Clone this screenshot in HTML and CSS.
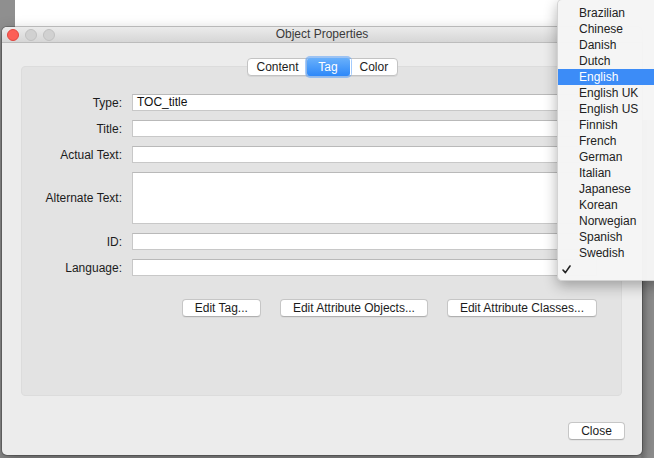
FILE: index.html
```html
<!DOCTYPE html>
<html>
<head>
<meta charset="utf-8">
<title>Object Properties</title>
<link rel="stylesheet" href="styles.css">
</head>
<body>
<div class="desktop">
  <div class="backdrop"></div>
  <div class="window">
    <div class="titlebar">
      <div class="lights">
        <span class="light close-l"></span>
        <span class="light"></span>
        <span class="light"></span>
      </div>
      <div class="title">Object Properties</div>
    </div>
    <div class="win-body">
      <div class="tabs">
        <div class="seg seg-content">Content</div>
        <div class="seg seg-tag active">Tag</div>
        <div class="seg seg-color">Color</div>
      </div>
      <div class="panel">
        <div class="form">
          <label class="lbl">Type:</label>
          <div class="field">TOC_title</div>
          <label class="lbl">Title:</label>
          <div class="field"></div>
          <label class="lbl">Actual Text:</label>
          <div class="field"></div>
          <label class="lbl">Alternate Text:</label>
          <div class="field tall"></div>
          <label class="lbl">ID:</label>
          <div class="field"></div>
          <label class="lbl">Language:</label>
          <div class="field"></div>
        </div>
        <div class="actions">
          <button class="btn">Edit Tag...</button>
          <button class="btn">Edit Attribute Objects...</button>
          <button class="btn">Edit Attribute Classes...</button>
        </div>
      </div>
      <div class="footer">
        <button class="btn btn-close">Close</button>
      </div>
    </div>
  </div>
  <div class="menu">
    <div class="item">Brazilian</div>
    <div class="item">Chinese</div>
    <div class="item">Danish</div>
    <div class="item">Dutch</div>
    <div class="item selected">English</div>
    <div class="item">English UK</div>
    <div class="item">English US</div>
    <div class="item">Finnish</div>
    <div class="item">French</div>
    <div class="item">German</div>
    <div class="item">Italian</div>
    <div class="item">Japanese</div>
    <div class="item">Korean</div>
    <div class="item">Norwegian</div>
    <div class="item">Spanish</div>
    <div class="item">Swedish</div>
    <div class="item check-item"><svg class="check" width="9" height="9" viewBox="0 0 9 9"><path d="M1 5 L3.4 7.6 L8 1" fill="none" stroke="#222" stroke-width="1.6" stroke-linecap="round" stroke-linejoin="round"/></svg></div>
  </div>
</div>
</body>
</html>
```

FILE: styles.css
```css
* { box-sizing: border-box; }
html, body {
  margin: 0;
  padding: 0;
  width: 654px;
  height: 458px;
  overflow: hidden;
}
body {
  font-family: "Liberation Sans", Arial, sans-serif;
  font-size: 12px;
  color: #1c1c1c;
  background: #8b8b8b;
}
.desktop {
  position: relative;
  width: 654px;
  height: 458px;
  background: linear-gradient(to right, #8f8f8f 0, #8f8f8f 640px, #7d7d7d 642px, #8e8e8e 648px);
}
.backdrop {
  position: absolute;
  left: 15px;
  top: 0;
  width: 639px;
  height: 120px;
  background: #ffffff;
}
.window {
  position: absolute;
  left: 2px;
  top: 27px;
  width: 640px;
  height: 428px;
  background: #ececec;
  border-radius: 5px;
  box-shadow: 0 0 0 1px rgba(0,0,0,0.22), 0 6px 16px rgba(0,0,0,0.35);
  display: flex;
  flex-direction: column;
  overflow: hidden;
}
.titlebar {
  position: relative;
  height: 16px;
  flex: 0 0 16px;
  background: linear-gradient(#ebebeb, #d6d6d6);
  border-bottom: 1px solid #bcbcbc;
  display: flex;
  align-items: center;
  justify-content: center;
}
.lights {
  position: absolute;
  left: 5px;
  top: 2px;
  display: flex;
  gap: 6px;
}
.light {
  width: 12px;
  height: 12px;
  border-radius: 50%;
  background: #d1d1d1;
  border: 1px solid #c0c0c0;
}
.light.close-l {
  background: #fc5f57;
  border-color: #e0463f;
}
.title {
  font-size: 12px;
  color: #3a3a3a;
  line-height: 15px;
}
.win-body {
  flex: 1;
  display: flex;
  flex-direction: column;
  padding: 15px 20px 0 19px;
}
.tabs {
  position: relative;
  z-index: 1;
  align-self: center;
  margin-left: 1px;
  display: flex;
  height: 18px;
  border: 1px solid #c3c3c3;
  border-radius: 4px;
  background: #fff;
  box-shadow: 0 1px 0 rgba(0,0,0,0.06);
}
.seg {
  line-height: 16px;
  padding: 0 9px;
  color: #1c1c1c;
  text-align: center;
}
.seg-content { width: 59px; border-right: 1px solid #d0d0d0; }
.seg-tag { width: 43px; }
.seg-color { width: 47px; border-left: 1px solid #fff; }
.seg.active {
  color: #fff;
  background: linear-gradient(#69b0fb, #2d88f9);
  margin: -1px 0;
  line-height: 18px;
  border-radius: 3px;
  box-shadow: 0 0 0 2px rgba(90,160,250,0.55);
}
.panel {
  margin-top: -10px;
  height: 330px;
  background: #e3e3e3;
  border: 1px solid #dcdcdc;
  border-radius: 4px;
  padding: 27px 24px 0 0;
  display: flex;
  flex-direction: column;
}
.form {
  display: grid;
  grid-template-columns: 100px 1fr;
  column-gap: 10px;
  row-gap: 9px;
  align-items: center;
}
.lbl {
  text-align: right;
  color: #1c1c1c;
  white-space: nowrap;
}
.field {
  height: 17px;
  background: #fff;
  border: 1px solid #c8c8c8;
  border-top-color: #b9b9b9;
  padding: 0 4px;
  line-height: 15px;
  color: #111;
}
.field.tall {
  height: 52px;
}
.actions {
  margin-top: 23px;
  display: flex;
  justify-content: flex-end;
  gap: 19px;
}
.btn {
  font-family: "Liberation Sans", Arial, sans-serif;
  font-size: 12px;
  color: #1c1c1c;
  height: 18px;
  line-height: 16px;
  padding: 0 12px;
  background: #ffffff;
  border: 1px solid #c6c6c6;
  border-bottom-color: #b0b0b0;
  border-radius: 4px;
  box-shadow: 0 1px 0 rgba(0,0,0,0.04);
  margin: 0;
}
.footer {
  display: flex;
  justify-content: flex-end;
  padding-top: 26px;
}
.btn-close {
  width: 57px;
  margin-right: -3px;
}
.menu {
  position: absolute;
  left: 557px;
  top: -1px;
  width: 110px;
  padding: 5px 0 3px;
  background: rgba(245,245,245,0.98);
  border: 1px solid rgba(0,0,0,0.14);
  border-radius: 5px;
  box-shadow: 0 5px 14px rgba(0,0,0,0.3);
  z-index: 5;
}
.item {
  height: 16px;
  line-height: 16px;
  padding-left: 21px;
  color: #222;
}
.item.selected {
  background: #3c8cf7;
  color: #fff;
}
.check-item {
  padding-left: 4px;
  display: flex;
  align-items: center;
}
```
